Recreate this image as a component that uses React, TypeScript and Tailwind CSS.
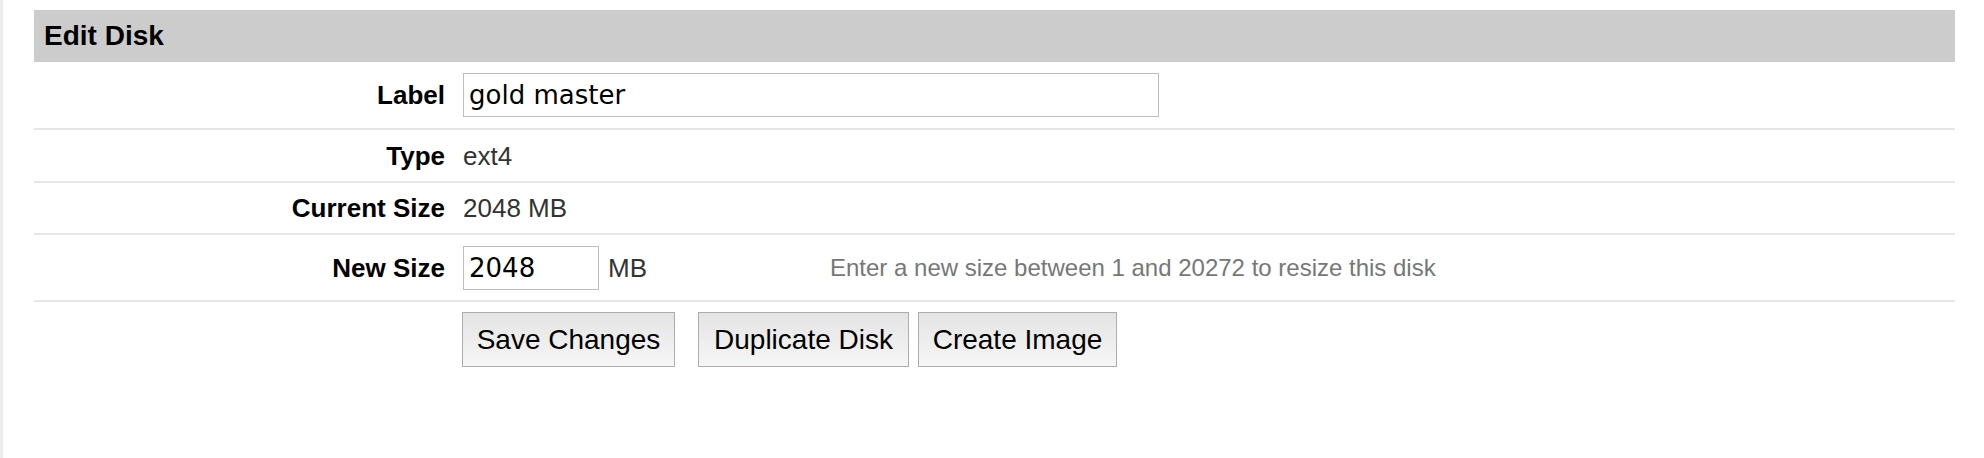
import React from "react"

const rows = [
  { label: "Type", value: "ext4", h: "h-[51px]" },
  { label: "Current Size", value: "2048 MB", h: "h-[50px]" },
]

export default function App() {
  return (
    <div className="flex min-h-[458px] bg-white font-['Liberation_Sans',Arial,sans-serif] text-black">
      {/* left edge strip */}
      <div className="w-[3px] shrink-0 bg-[#ebebeb]" />

      <div className="pl-[31px] pt-[10px]">
        <div className="w-[1921px]">
          {/* Header */}
          <div className="flex h-[52px] items-center bg-[#cccccc] pl-[10px]">
            <h2 className="text-[28px] font-bold leading-none">Edit Disk</h2>
          </div>

          {/* Label */}
          <div className="flex h-[68px] items-center border-b-2 border-[#e6e6e6]">
            <div className="w-[411px] pr-0 text-right text-[26px] font-bold leading-none">Label</div>
            <input
              type="text"
              defaultValue="gold master"
              className="ml-[18px] h-[44px] w-[696px] border border-[#bdbdbd] px-[5px] font-['DejaVu_Sans',sans-serif] text-[26px] text-black outline-none"
            />
          </div>

          {rows.map((r) => (
            <div
              key={r.label}
              className={`flex ${r.h === "h-[51px]" ? "h-[53px]" : "h-[52px]"} items-center border-b-2 border-[#e6e6e6]`}
            >
              <div className="w-[411px] text-right text-[26px] font-bold leading-none">{r.label}</div>
              <div className="ml-[18px] text-[26px] leading-none text-[#333333]">{r.value}</div>
            </div>
          ))}

          {/* New Size */}
          <div className="flex h-[67px] items-center border-b-2 border-[#e6e6e6]">
            <div className="w-[411px] text-right text-[26px] font-bold leading-none">New Size</div>
            <input
              type="text"
              defaultValue="2048"
              className="ml-[18px] h-[44px] w-[136px] border border-[#bdbdbd] px-[5px] font-['DejaVu_Sans',sans-serif] text-[26px] text-black outline-none"
            />
            <span className="ml-[9px] w-[222px] text-[26px] leading-none text-[#333333]">MB</span>
            <span className="text-[24px] leading-none text-[#777777]">
              Enter a new size between 1 and 20272 to resize this disk
            </span>
          </div>

          {/* Buttons */}
          <div className="mt-[10px] flex pl-[428px]">
            <button className="h-[55px] w-[213px] border border-[#adadad] bg-gradient-to-b from-[#e4e4e4] to-[#f6f6f6] text-[28px] leading-none text-black">
              Save Changes
            </button>
            <button className="ml-[23px] h-[55px] w-[211px] border border-[#adadad] bg-gradient-to-b from-[#e4e4e4] to-[#f6f6f6] text-[28px] leading-none text-black">
              Duplicate Disk
            </button>
            <button className="ml-[9px] h-[55px] w-[199px] border border-[#adadad] bg-gradient-to-b from-[#e4e4e4] to-[#f6f6f6] text-[28px] leading-none text-black">
              Create Image
            </button>
          </div>
        </div>
      </div>
    </div>
  )
}
